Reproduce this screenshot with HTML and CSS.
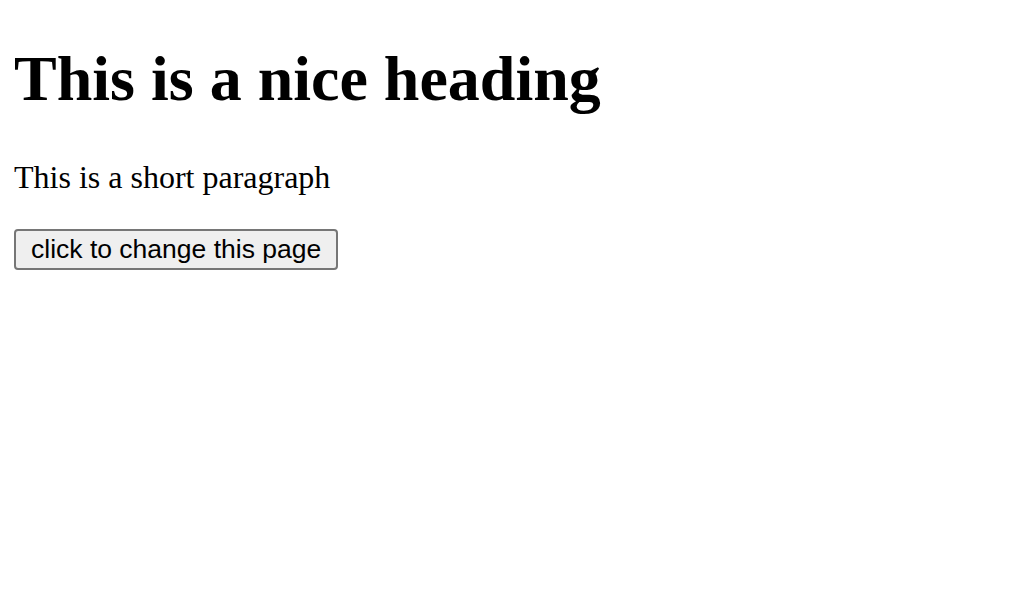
FILE: index.html
```html
<!DOCTYPE html>
<html>
<head>
<meta charset="utf-8">
<link rel="stylesheet" href="styles.css">
</head>
<body class="page">
<h1 class="title">This is a nice heading</h1>
<p class="text">This is a short paragraph</p>
<button class="btn">click to change this page</button>
</body>
</html>
```
FILE: styles.css
```css
html { background: #fff; }
.page {
  margin: 14px;
  font-family: "Liberation Serif", "Times New Roman", serif;
  font-size: 32px;
  color: #000;
}
.title {
  font-size: 64px;
  font-weight: bold;
  margin: 28px 0 42.6px;
}
.text {
  margin: 0 0 33px;
}
.btn {
  display: inline-block;
  font-family: "Liberation Sans", Arial, sans-serif;
  font-size: 26.5px;
  line-height: 30px;
  color: #000;
  background: #efefef;
  border: 2px solid #767676;
  border-radius: 4px;
  padding: 3.5px 15px;
  margin: 0;
}
```
